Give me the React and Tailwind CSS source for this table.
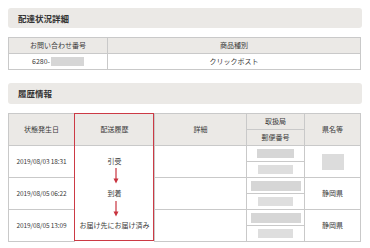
import React from 'react';

const font = { fontFamily: '"Noto Sans CJK JP", "Noto Sans", sans-serif' };

function Redact({ className = '' }) {
  return <span className={`inline-block bg-[#d6d6d6] align-middle ${className}`} />;
}

function SectionBar({ title, className = '' }) {
  return (
    <div className={`mx-2 flex items-center rounded-[3px] bg-[#ebe9e6] pl-[10px] ${className}`}>
      <span className="text-[8.5px] font-bold text-[#333]">{title}</span>
    </div>
  );
}

const th = 'border border-[#c9c9c9] bg-[#ebe9e6] text-center font-normal p-0 h-[16px] leading-none';
const td = 'border border-[#c9c9c9] bg-white text-center p-0 h-[16px] leading-none';

function Arrow({ top }) {
  return (
    <svg
      className="absolute left-[38px]"
      style={{ top }}
      width="6"
      height="16"
      viewBox="0 0 6 16"
    >
      <line x1="3" y1="0" x2="3" y2="12" stroke="#c8323e" strokeWidth="1.2" />
      <path d="M0.5 10.5 L3 15.5 L5.5 10.5 Z" fill="#c8323e" />
    </svg>
  );
}

export default function App() {
  const rows = [
    { date: '2019/08/03 18:31', status: '引受', pref: null, wide: false },
    { date: '2019/08/05 06:22', status: '到着', pref: '静岡県', wide: true },
    { date: '2019/08/05 13:09', status: 'お届け先にお届け済み', pref: '静岡県', wide: true },
  ];

  return (
    <div className="w-[370px] h-[248px] bg-white pt-[8px] text-[#3a3a3a] overflow-hidden" style={font}>
      <SectionBar title="配達状況詳細" className="h-[20px]" />

      <table className="mx-2 mt-[9px] w-[353px] border-collapse table-fixed text-[7px]">
        <colgroup>
          <col className="w-[99px]" />
          <col />
        </colgroup>
        <thead>
          <tr>
            <th className={th}>お問い合わせ番号</th>
            <th className={th}>商品種別</th>
          </tr>
        </thead>
        <tbody>
          <tr>
            <td className={td}>
              <span className="align-middle">6280-</span>
              <Redact className="ml-[1px] w-[33px] h-[9px]" />
            </td>
            <td className={td}>クリックポスト</td>
          </tr>
        </tbody>
      </table>

      <SectionBar title="履歴情報" className="mt-[13px] h-[21px]" />

      <div className="relative mx-2 mt-[9px] w-[353px]">
        <table className="w-full border-collapse table-fixed text-[7px]">
          <colgroup>
            <col className="w-[66px]" />
            <col className="w-[80px]" />
            <col className="w-[92px]" />
            <col className="w-[58px]" />
            <col />
          </colgroup>
          <thead>
            <tr>
              <th rowSpan={2} className={th}>状態発生日</th>
              <th rowSpan={2} className={th}>配送履歴</th>
              <th rowSpan={2} className={th}>詳細</th>
              <th className={th}>取扱局</th>
              <th rowSpan={2} className={th}>県名等</th>
            </tr>
            <tr>
              <th className={th}>郵便番号</th>
            </tr>
          </thead>
          <tbody>
            {rows.map((r) => (
              <React.Fragment key={r.date}>
                <tr>
                  <td rowSpan={2} className={`${td} text-[6.5px] tracking-[-0.1px]`}>{r.date}</td>
                  <td rowSpan={2} className={`${td} border-y-0`}>{r.status}</td>
                  <td rowSpan={2} className={td}></td>
                  <td className={td}>
                    <Redact className={r.wide ? 'w-[50px] h-[10px]' : 'w-[37px] h-[9px]'} />
                  </td>
                  <td rowSpan={2} className={td}>
                    {r.pref ? r.pref : <Redact className="w-[22px] h-[16px] bg-[#dcdcdc]" />}
                  </td>
                </tr>
                <tr>
                  <td className={td}>
                    <Redact className="w-[35px] h-[9px] bg-[#dedede]" />
                  </td>
                </tr>
              </React.Fragment>
            ))}
          </tbody>
        </table>

        {/* 配送履歴の赤枠と矢印 */}
        <div className="absolute top-0 left-[66px] w-[80px] h-[128px] border-[1.5px] border-[#cc3a45]">
          <Arrow top={54} />
          <Arrow top={87} />
        </div>
      </div>
    </div>
  );
}
